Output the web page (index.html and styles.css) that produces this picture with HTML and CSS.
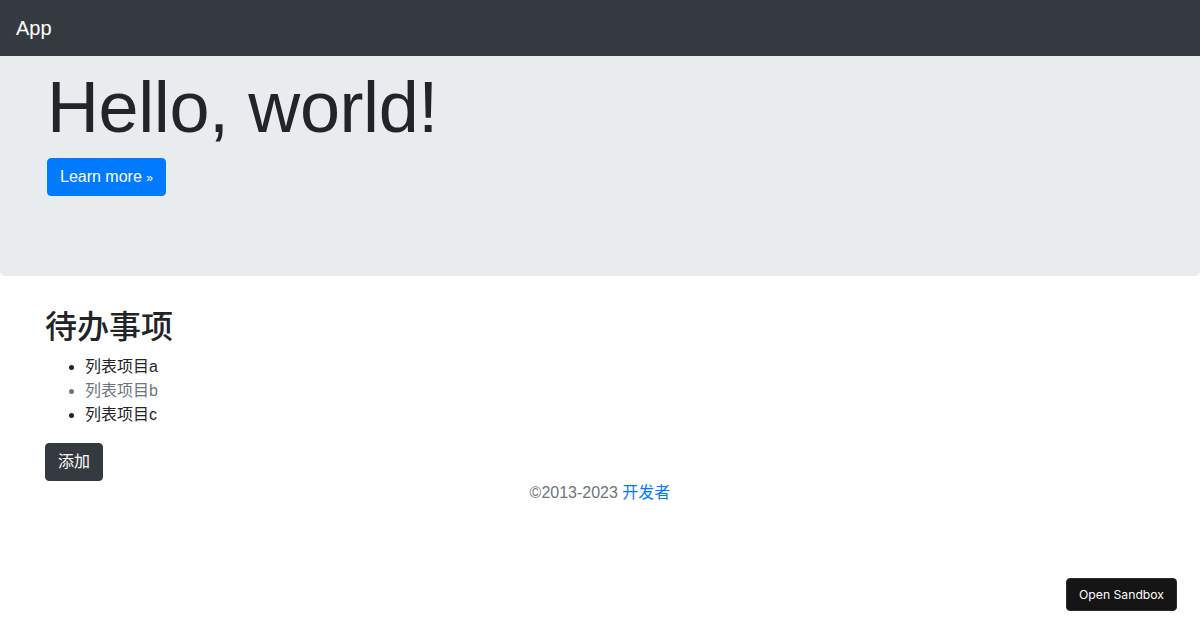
FILE: index.html
```html
<!DOCTYPE html>
<html lang="zh">
<head>
<meta charset="utf-8">
<title>App</title>
<link rel="stylesheet" href="styles.css">
</head>
<body>
<nav class="navbar">
  <a class="brand" href="#">App</a>
</nav>
<main>
  <div class="jumbotron">
    <div class="container">
      <h1 class="display">Hello, world!</h1>
      <p class="lead-row"><a class="btn btn-primary" href="#">Learn more <span class="raquo">»</span></a></p>
    </div>
  </div>
  <div class="container">
    <h2 class="section-title">待办事项</h2>
    <ul class="items">
      <li>列表项目a</li>
      <li class="muted">列表项目b</li>
      <li>列表项目c</li>
    </ul>
    <button class="btn btn-dark" type="button">添加</button>
    <p class="footer">©2013-2023 <a href="#">开发者</a></p>
  </div>
</main>
<a class="sandbox" href="#">Open Sandbox</a>
</body>
</html>
```
FILE: styles.css
```css
* { box-sizing: border-box; }
html, body { margin: 0; padding: 0; }
body {
  font-family: "Liberation Sans", Arial, "Noto Sans CJK SC", sans-serif;
  font-size: 16px;
  line-height: 1.5;
  color: #212529;
  background: #fff;
}
.navbar {
  position: fixed;
  top: 0;
  left: 0;
  right: 0;
  height: 56px;
  background: #343a40;
  padding: 8px 16px;
  display: flex;
  align-items: center;
  z-index: 10;
}
.brand {
  color: #fff;
  font-size: 20px;
  line-height: 30px;
  padding: 5px 0;
  text-decoration: none;
}
.jumbotron {
  background: #e9ecef;
  padding: 64px 32px;
  margin-bottom: 32px;
  border-radius: 4.8px;
}
.container {
  width: 100%;
  max-width: 1140px;
  margin: 0 auto;
  padding: 0 15px;
}
.display {
  margin: 0 0 8px;
  font-size: 72px;
  font-weight: 300;
  line-height: 1.2;
  letter-spacing: -0.4px;
}
.lead-row { margin: 0 0 16px; }
.btn {
  display: inline-block;
  font-family: inherit;
  font-size: 16px;
  line-height: 24px;
  padding: 6px 12px;
  border: 1px solid transparent;
  border-radius: 4px;
  text-decoration: none;
  cursor: pointer;
}
.btn-primary { background: #007bff; border-color: #007bff; color: #fff; }
.raquo { font-size: 12px; line-height: 1; }
.btn-dark { background: #343a40; border-color: #343a40; color: #fff; }
.section-title {
  margin: 0 0 8px;
  font-size: 32px;
  font-weight: 500;
  line-height: 1.2;
}
.items { margin: 0 0 16px; padding-left: 40px; }
.muted { color: #6c757d; }
.footer {
  margin: 0;
  text-align: center;
  color: #6c757d;
}
.footer a { color: #007bff; text-decoration: none; }
.sandbox {
  position: fixed;
  right: 23px;
  bottom: 19px;
  width: 111px;
  height: 33px;
  background: #151515;
  color: #fff;
  font-family: Inter, "Liberation Sans", sans-serif;
  font-size: 12.2px;
  line-height: 31px;
  text-align: center;
  border-radius: 4px;
  border: 1px solid #2a2a2a;
  text-decoration: none;
}
```
